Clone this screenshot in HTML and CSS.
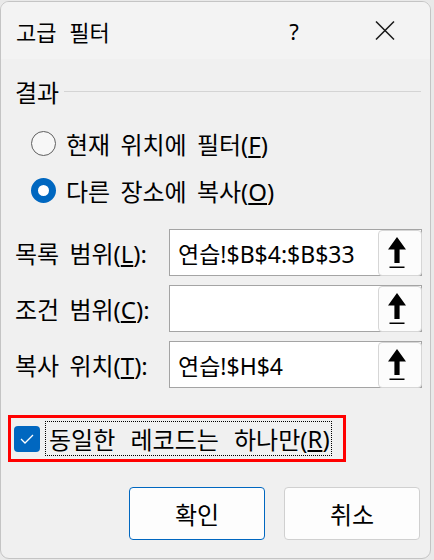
FILE: index.html
```html
<!DOCTYPE html>
<html lang="ko">
<head>
  <meta charset="UTF-8" />
  <title>고급 필터</title>
  <link rel="stylesheet" href="styles.css">
</head>
<body>
  <div class="dialog">
    <div class="titlebar">
      <span class="title">고급 필터</span>
      <span class="help">?</span>
      <span class="close">
        <svg width="20" height="19" viewBox="0 0 20 19"><path d="M1 0.5 L19 18.5 M19 0.5 L1 18.5" stroke="#1a1a1a" stroke-width="1.5" fill="none"/></svg>
      </span>
    </div>

    <div class="content">
      <div class="groupHead">
        <span>결과</span>
        <span class="rule"></span>
      </div>

      <div class="radios">
        <label class="radio"><span class="circle"></span><span>현재 위치에 필터(<u>F</u>)</span></label>
        <label class="radio on"><span class="circle"></span><span>다른 장소에 복사(<u>O</u>)</span></label>
      </div>

      <div class="fields">
        <div class="row">
          <span class="label">목록 범위(<u>L</u>):</span>
          <div class="box">
            <span class="value">연습!$B$4:$B$33</span>
            <span class="pick"><svg width="20" height="31" viewBox="0 0 20 31"><path d="M10 0 L19 12.5 L12.6 12.5 L12.6 26 L7.4 26 L7.4 12.5 L1 12.5 Z" fill="#000"/><rect x="2.5" y="29.5" width="15" height="1.5" fill="#000"/></svg></span>
          </div>
        </div>
        <div class="row">
          <span class="label">조건 범위(<u>C</u>):</span>
          <div class="box">
            <span class="value"></span>
            <span class="pick"><svg width="20" height="31" viewBox="0 0 20 31"><path d="M10 0 L19 12.5 L12.6 12.5 L12.6 26 L7.4 26 L7.4 12.5 L1 12.5 Z" fill="#000"/><rect x="2.5" y="29.5" width="15" height="1.5" fill="#000"/></svg></span>
          </div>
        </div>
        <div class="row">
          <span class="label">복사 위치(<u>T</u>):</span>
          <div class="box">
            <span class="value">연습!$H$4</span>
            <span class="pick"><svg width="20" height="31" viewBox="0 0 20 31"><path d="M10 0 L19 12.5 L12.6 12.5 L12.6 26 L7.4 26 L7.4 12.5 L1 12.5 Z" fill="#000"/><rect x="2.5" y="29.5" width="15" height="1.5" fill="#000"/></svg></span>
          </div>
        </div>
      </div>

      <div class="unique">
        <span class="check"><svg width="14" height="10" viewBox="0 0 14 10"><path d="M1 5 L5 9 L13 1" stroke="#fff" stroke-width="1.3" fill="none"/></svg></span>
        <span class="focus">동일한 레코드는 하나만(<u>R</u>)</span>
      </div>

      <div class="actions">
        <button class="primary">확인</button>
        <button>취소</button>
      </div>
    </div>
  </div>
</body>
</html>
```

FILE: styles.css
```css
* {
  box-sizing: border-box;
  margin: 0;
  padding: 0;
}

body {
  width: 434px;
  height: 560px;
  background: #e9e9e9;
  font-family: "Noto Sans", "Noto Sans CJK KR", sans-serif;
  color: #000;
  overflow: hidden;
}

.dialog {
  width: 431px;
  height: 558px;
  margin-top: 1px;
  border: 1px solid #c4c4c4;
  border-radius: 9px;
  background: #f0f0f0;
  overflow: hidden;
}

.titlebar {
  height: 57px;
  background: #f3f3f3;
  display: flex;
  align-items: center;
  font-size: 22px;
}

.title {
  margin-left: 15px;
  width: 258px;
  word-spacing: 7px;
}

.help {
  width: 40px;
  text-align: center;
  font-family: "Noto Sans", sans-serif;
}

.close {
  margin-left: 61px;
  display: flex;
}

.content {
  padding: 20px 0 0 14px;
  font-size: 24px;
  word-spacing: 4px;
}

.groupHead {
  display: flex;
  align-items: center;
  height: 24px;
  gap: 5px;
}

.rule {
  flex: 1;
  height: 1px;
  background: #d4d4d4;
  margin-right: 9px;
  margin-top: 1px;
}

.radios {
  padding: 27px 0 0 16px;
  display: flex;
  flex-direction: column;
  gap: 21px;
}

.radio {
  display: flex;
  align-items: center;
  height: 26px;
  gap: 10px;
}

.circle {
  width: 25px;
  height: 25px;
  border-radius: 50%;
  border: 1.5px solid #5f5f5f;
  background: #f7f7f7;
}

.radio.on .circle {
  border: 7.5px solid #0067c0;
  background: #fff;
}

.fields {
  margin-top: 26px;
  display: flex;
  flex-direction: column;
  gap: 9px;
}

.row {
  display: flex;
  align-items: center;
  height: 47px;
}

.label {
  width: 154px;
}

.box {
  width: 253px;
  height: 47px;
  border: 1px solid #a4a4a4;
  background: #fff;
  display: flex;
  align-items: center;
}

.value {
  flex: 1;
  padding-left: 8px;
  font-size: 23px;
  word-spacing: 0;
}

.pick {
  width: 44px;
  height: 46px;
  margin-right: -1px;
  border: 1px solid #d6d6d6;
  border-radius: 4px;
  background: #fcfcfc;
  display: flex;
  align-items: center;
  justify-content: center;
  padding-right: 6px;
}

.unique {
  margin: 27px 0 0 -7px;
  width: 338px;
  height: 47px;
  border: 3px solid #f00;
  display: flex;
  align-items: center;
  padding-left: 3px;
  gap: 5px;
}

.check {
  width: 26px;
  height: 26px;
  border-radius: 4px;
  background: #0067c0;
  display: flex;
  align-items: center;
  justify-content: center;
}

.focus {
  border: 1px dotted #000;
  height: 35px;
  display: flex;
  align-items: center;
  padding: 0 1px 0 3px;
  word-spacing: 9px;
}

.actions {
  margin-top: 25px;
  display: flex;
  gap: 19px;
  padding-left: 114px;
}

.actions button {
  width: 136px;
  height: 53px;
  font: inherit;
  font-size: 24px;
  background: #fdfdfd;
  border: 1px solid #d0d0d0;
  border-radius: 4px;
}

.actions .primary {
  border-color: #0067c0;
}
```
